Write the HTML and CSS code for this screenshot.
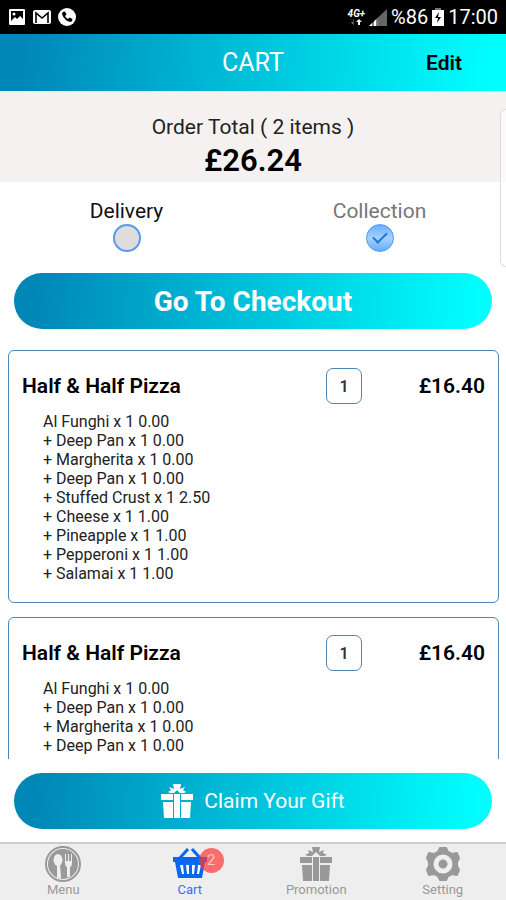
FILE: index.html
```html
<!DOCTYPE html>
<html lang="en">
<head>
<meta charset="utf-8">
<meta name="viewport" content="width=device-width, initial-scale=1">
<title>Cart</title>
<link rel="stylesheet" href="styles.css">
</head>
<body>
<div class="app">
  <div class="status">
    <div class="status-group">
      <svg width="18" height="18" viewBox="0 0 18 18"><rect x="1" y="1" width="16" height="16" rx="1" fill="#fff"/><path d="M3 3h12v8l-3-3-3 3-2-2-4 4z" fill="#000"/><circle cx="6" cy="6" r="1.500" fill="#fff"/></svg>
      <svg width="18" height="18" viewBox="0 0 18 18"><rect x="0" y="2" width="18" height="14" rx="2" fill="#fff"/><path d="M3 15V5l6 5 6-5v10" fill="none" stroke="#000" stroke-width="1.600"/></svg>
      <svg width="18" height="18" viewBox="0 0 18 18"><circle cx="9" cy="9" r="9" fill="#fff"/><path d="M5 4l2-.5 1.500 3L7 8c.6 1.300 1.600 2.300 3 3l1.500-1.500 3 1.500-.5 2c-.6 1-1.700 1-2.700.7C8 12.800 5.300 10 4.300 6.800 4 5.600 4.100 4.600 5 4z" fill="#000"/></svg>
    </div>
    <div class="status-group status-right">
      <span class="network"><b>4G+</b><svg width="12" height="6" viewBox="0 0 12 6"><path d="M3 0v3H1l2.500 3V0z" fill="#888"/><path d="M8 6V3H6l3-3 3 3h-2v3z" fill="#fff"/></svg></span>
      <svg width="18" height="17" viewBox="0 0 18 17"><path d="M18 0v17H0z" fill="#666"/><path d="M9 8.500V17H0z" fill="#fff"/><path d="M4 11v6M8 8v9" stroke="#000" stroke-width="1"/></svg>
      <span class="percent">%86</span>
      <svg width="12" height="18" viewBox="0 0 12 18"><path d="M3 0h6v2h3v16H0V2h3z" fill="#fff"/><path d="M3 0h6v2H3z" fill="#777"/><path d="M7 4l-4 6h3l-1 5 4-6H6z" fill="#000"/></svg>
      <span>17:00</span>
    </div>
  </div>

  <header class="header">
    <h1 class="title">CART</h1>
    <button class="edit" type="button">Edit</button>
  </header>

  <main class="main">
    <section class="total">
      <p class="total-label">Order Total ( 2 items )</p>
      <p class="total-value">£26.24</p>
      <span class="edge-handle"></span>
    </section>

    <div class="methods">
      <label class="method method-delivery">Delivery<input class="radio" type="radio" name="method"></label>
      <label class="method">Collection<input class="radio" type="radio" name="method" checked></label>
    </div>

    <button class="pill checkout" type="button">Go To Checkout</button>

    <div class="list">
      <article class="card">
        <div class="card-head">
          <h2 class="name">Half &amp; Half Pizza</h2>
          <input class="qty" type="text" inputmode="numeric" value="1" aria-label="Quantity">
          <span class="price">£16.40</span>
        </div>
        <ul class="extras">
          <li>Al Funghi x 1 0.00</li>
          <li>+ Deep Pan x 1 0.00</li>
          <li>+ Margherita x 1 0.00</li>
          <li>+ Deep Pan x 1 0.00</li>
          <li>+ Stuffed Crust x 1 2.50</li>
          <li>+ Cheese x 1 1.00</li>
          <li>+ Pineapple x 1 1.00</li>
          <li>+ Pepperoni x 1 1.00</li>
          <li>+ Salamai x 1 1.00</li>
        </ul>
      </article>
      <article class="card">
        <div class="card-head">
          <h2 class="name">Half &amp; Half Pizza</h2>
          <input class="qty" type="text" inputmode="numeric" value="1" aria-label="Quantity">
          <span class="price">£16.40</span>
        </div>
        <ul class="extras">
          <li>Al Funghi x 1 0.00</li>
          <li>+ Deep Pan x 1 0.00</li>
          <li>+ Margherita x 1 0.00</li>
          <li>+ Deep Pan x 1 0.00</li>
        </ul>
      </article>
    </div>

    <button class="pill gift" type="button">
      <svg width="32" height="35" viewBox="0 0 32 35" fill="currentColor"><path d="M12 0h8l-1 5 5-2-2 3 3 2-2 1h-4l-3-3-3 3H9L7 8l3-2-2-3 5 2z"/><path d="M0 10h12v6H0zM13 10h6v24h-6zM20 10h12v6H20zM2 18h10v16H3zM20 18h10l-1 16h-9z"/></svg>
      Claim Your Gift
    </button>
  </main>

  <nav class="tabs">
    <a class="tab" href="#menu">
      <svg width="36" height="36" viewBox="0 0 36 36"><circle cx="18" cy="18" r="17" fill="none" stroke="#999" stroke-width="2"/><circle cx="18" cy="18" r="15" fill="#999"/><ellipse cx="13" cy="14" rx="4.500" ry="6" fill="#eee"/><path d="M12 18h3l1 14h-4z" fill="#eee"/><path d="M20 8h1v7h2V8h1v7h2V8h1v9q0 3-2 4v10h-3V21q-2-1-2-4z" fill="#eee"/></svg>
      Menu
    </a>
    <a class="tab tab-active" href="#cart">
      <svg width="36" height="36" viewBox="0 0 36 36"><path d="M7 13L16 3M29 13L20 3" fill="none" stroke="#0867f2" stroke-width="3"/><path d="M1 11h34v5h-2l-3 16H6L3 16H1z" fill="#0867f2"/><path d="M8 19h3l1 9h-2zM14 19h3v9h-2zM20 19h3l-1 9h-2zM26 19h3l-2 9h-2z" fill="#fff"/></svg>
      Cart
      <span class="badge">2</span>
    </a>
    <a class="tab" href="#promotion">
      <svg width="36" height="36" viewBox="0 0 36 36" fill="#999"><path d="M14 1h8l-1 5 5-2-1 3 4 2-3 1h-4l-4-4-4 4h-4L7 9l4-2-1-3 5 2z"/><path d="M2 11h12v6H2zM15 11h6v24h-6zM22 11h12v6H22zM4 19h10v16H5zM22 19h10l-1 16h-9z"/></svg>
      Promotion
    </a>
    <a class="tab" href="#setting">
      <svg width="36" height="36" viewBox="0 0 36 36"><path d="M15 2h6l2 4 4 2 5-1 2 5-2 4v4l2 4-2 5-5-1-4 2-2 4h-6l-2-4-4-2-5 1-2-5 2-4v-4l-2-4 2-5 5 1 4-2z" fill="#999" stroke="#999" stroke-width="2" stroke-linejoin="round"/><circle cx="18" cy="18" r="7" fill="#999" stroke="#eee" stroke-width="5"/></svg>
      Setting
    </a>
  </nav>
</div>
</body>
</html>
```
FILE: styles.css
```css
* { box-sizing: border-box; }
body, h1, h2, p, ul { margin: 0; padding: 0; }
body { font-family: Roboto, "Liberation Sans", sans-serif; color: #000; background: #fff; }
button, input { font: inherit; color: inherit; margin: 0; }
button { border: 0; cursor: pointer; }
svg { display: block; flex: none; }

.app { display: flex; flex-direction: column; height: 100vh; }

.status { display: flex; justify-content: space-between; align-items: center; height: 34px; padding: 0 8px; background: #000; color: #fff; font-size: 20px; }
.status-group { display: flex; align-items: center; gap: 7px; }
.status-right { gap: 4px; }
.network { display: flex; flex-direction: column; align-items: center; font-size: 10px; line-height: 10px; font-style: italic; }

.header { display: grid; grid-template-columns: 1fr auto 1fr; align-items: center; height: 57px; background: linear-gradient(95deg, #0086b7 4%, #00ffff 97%); }
.title { grid-column: 2; color: #fff; font-size: 25px; font-weight: 400; }
.edit { justify-self: end; padding: 0 44px; background: none; font-size: 21px; font-weight: 600; }

.main { display: flex; flex-direction: column; flex: 1; min-height: 0; }

.total { position: relative; padding: 23px 0 0; background: #f6f1f1; text-align: center; }
.total-label { font-size: 21px; line-height: 26px; color: #222; }
.total-value { font-size: 31px; line-height: 42px; font-weight: 600; }
.edge-handle { position: absolute; top: 18px; right: 0; width: 6px; height: 158px; border: 1px solid #ddd; border-right: 0; border-radius: 7px 0 0 7px; background: rgba(255, 255, 255, 0.6); }

.methods { display: grid; grid-template-columns: 1fr 1fr; padding: 16px 0 21px; }
.method { display: flex; flex-direction: column; align-items: center; font-size: 21px; line-height: 26px; color: #777; }
.method-delivery { color: #111; }
.radio { appearance: none; width: 28px; height: 28px; border: 2px solid #5599f0; border-radius: 50%; background: #ddd; }
.radio:checked { display: grid; place-items: center; border-width: 1px; background: linear-gradient(#69aefb, #a4d2ff 50%, #65adff); }
.radio:checked::after { content: ""; width: 12px; height: 6px; border: solid #2277d8; border-width: 0 0 2px 2px; transform: translateY(-2px) rotate(-45deg); }

.pill { display: flex; align-items: center; justify-content: center; flex: none; height: 56px; margin: 0 14px; border-radius: 28px; background: linear-gradient(95deg, #0086b7 4%, #00ffff 97%); color: #fff; }
.checkout { font-size: 28px; font-weight: 700; }
.gift { gap: 11px; margin-top: 14px; margin-bottom: 13px; font-size: 21px; }

.list { flex: 1; min-height: 0; margin-top: 21px; padding: 0 7px 0 8px; overflow-y: auto; scrollbar-width: none; }
.card { margin-bottom: 14px; padding: 17px 13px 19px; border: 1px solid #4b88b5; border-radius: 6px; }
.card-head { display: grid; grid-template-columns: 1fr 36px 123px; align-items: center; }
.name { font-size: 21px; line-height: 24px; font-weight: 600; }
.qty { width: 36px; height: 36px; padding: 0; border: 1px solid #4b88b5; border-radius: 7px; background: #fff; color: #333; font-size: 16px; font-weight: 600; text-align: center; }
.price { font-size: 21px; line-height: 24px; font-weight: 600; text-align: right; }
.extras { padding: 8px 0 0 21px; list-style: none; font-size: 16px; line-height: 19px; color: #222; }

.tabs { display: grid; grid-template-columns: repeat(4, 1fr); flex: none; padding: 2px 0; border-top: 2px solid #ccc; background: #eee; }
.tab { position: relative; display: flex; flex-direction: column; align-items: center; font-size: 13px; line-height: 16px; color: #999; text-decoration: none; }
.tab-active { color: #3a6cf0; }
.badge { position: absolute; top: 2px; left: calc(50% + 9px); width: 25px; height: 25px; border-radius: 50%; background: rgba(255, 54, 54, 0.7); color: #ffc4c4; font-size: 15px; line-height: 25px; text-align: center; }
```
